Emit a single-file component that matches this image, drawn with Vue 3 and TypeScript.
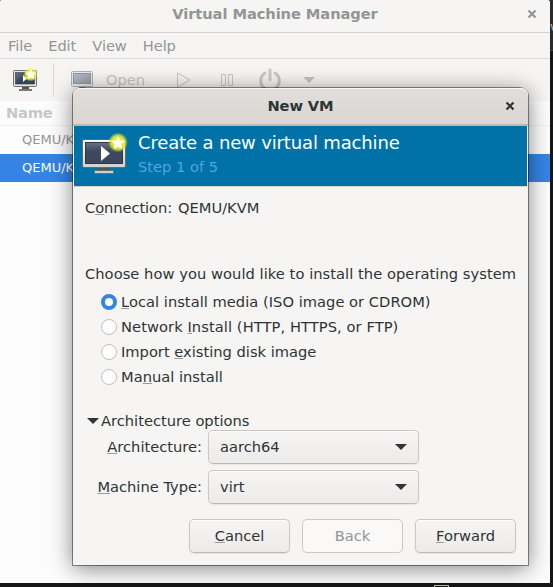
<script setup lang="ts">
import { ref } from 'vue'

interface InstallMethod {
  id: string
  before: string
  key: string
  after: string
}

const menus: string[] = ['File', 'Edit', 'View', 'Help']
const connections: string[] = ['QEMU/KVM', 'QEMU/KVM']
const methods: InstallMethod[] = [
  { id: 'local', before: '', key: 'L', after: 'ocal install media (ISO image or CDROM)' },
  { id: 'network', before: 'Network ', key: 'I', after: 'nstall (HTTP, HTTPS, or FTP)' },
  { id: 'import', before: 'Import ', key: 'e', after: 'xisting disk image' },
  { id: 'manual', before: 'Ma', key: 'n', after: 'ual install' },
]
const fields = [
  { key: 'A', label: 'rchitecture:', value: 'aarch64' },
  { key: 'M', label: 'achine Type:', value: 'virt' },
]
const selectedMethod = ref('local')
const selectedRow = ref(1)
</script>

<template>
  <div class="desktop">
    <span class="stray">v</span>
    <span class="taskicon"></span>
    <main class="window">
      <header class="titlebar">
        <span>Virtual Machine Manager</span>
        <svg class="close" width="10" height="10" viewBox="0 0 10 10"><path d="M1.5 1.5 8.5 8.5M8.5 1.5 1.5 8.5" /></svg>
      </header>
      <nav class="menubar">
        <span v-for="m in menus" :key="m">{{ m }}</span>
      </nav>
      <div class="toolbar">
        <svg class="new-icon" width="26" height="26" viewBox="0 0 26 26">
          <defs>
            <radialGradient id="glowS"><stop offset="0.4" stop-color="#f2f020" /><stop offset="0.7" stop-color="#f2f020" stop-opacity=".85" /><stop offset="1" stop-color="#f2f020" stop-opacity="0" /></radialGradient>
            <linearGradient id="scrS" x1="0" y1="0" x2="1" y2="1"><stop offset="0" stop-color="#66758c" /><stop offset=".5" stop-color="#35445a" /><stop offset="1" stop-color="#35445a" /></linearGradient>
          </defs>
          <path d="M10 20h7v2h-7z" fill="#555" />
          <path d="M7 22h13v2H7z" fill="#777974" />
          <rect x="1.5" y="3.5" width="23" height="16" rx="1" fill="#e4e4e0" stroke="#74756f" />
          <rect x="3.500" y="5.500" width="19" height="11.500" fill="url(#scrS)" stroke="#333b45" stroke-width=".6" />
          <path d="M11 8v7l4-3.500z" fill="#fff" />
          <circle cx="18.500" cy="7.500" r="7" fill="url(#glowS)" />
          <path d="m18.800 1.800 1.700 3.500 3.800.5-2.800 2.700.7 3.900-3.400-1.900-3.400 1.900.7-3.900-2.800-2.700 3.800-.5z" fill="#fff" />
        </svg>
        <i class="divider"></i>
        <svg class="open-icon" width="24" height="24" viewBox="0 0 24 24">
          <defs><linearGradient id="scrD" x1="0" y1="0" x2="1" y2="1"><stop offset="0" stop-color="#b5bbc2" /><stop offset="1" stop-color="#959da7" /></linearGradient></defs>
          <rect x="1.500" y="3.500" width="21" height="15" rx="1" fill="#e8e8e6" stroke="#b0b0ad" />
          <rect x="3.500" y="5.500" width="17" height="10" fill="url(#scrD)" stroke="#8f969e" />
          <path d="M9 19h6v2H9z" fill="#aaa" />
        </svg>
        <span class="open-label">Open</span>
        <svg class="play" width="16" height="16" viewBox="0 0 16 16"><path d="M1.500 1 14 8 1.500 15z" /></svg>
        <svg class="pause" width="14" height="14" viewBox="0 0 14 14"><path d="M1.500 1.500h4v11h-4zM8.500 1.500h4v11h-4z" /></svg>
        <svg class="power" width="24" height="24" viewBox="0 0 24 24"><path d="M7 5a9.300 9.300 0 1 0 10 0M12 1.800v10" /></svg>
        <svg class="caret" width="12" height="6" viewBox="0 0 12 6"><path d="M0 0h12L6 6z" /></svg>
      </div>
      <div class="column-head">Name</div>
      <div v-for="(c, i) in connections" :key="i" class="row" :class="{ active: i === selectedRow }">{{ c }}</div>
    </main>

    <section class="dialog">
      <header class="dialog-title">
        <span>New VM</span>
        <svg class="close" width="10" height="10" viewBox="0 0 10 10"><path d="M1.500 1.500 8.500 8.500M8.500 1.500 1.500 8.500" /></svg>
      </header>
      <div class="banner">
        <svg class="vm-icon" width="48" height="44" viewBox="0 0 48 44">
          <defs>
            <radialGradient id="glow"><stop offset="0.400" stop-color="#f5f31a" /><stop offset=".7" stop-color="#dce629" stop-opacity=".9" /><stop offset="1" stop-color="#b8d83c" stop-opacity="0" /></radialGradient>
            <linearGradient id="frame" x1="0" y1="0" x2="0" y2="1"><stop offset="0" stop-color="#fff" /><stop offset="1" stop-color="#d0d1cc" /></linearGradient>
            <linearGradient id="screen" x1="0" y1="0" x2="0" y2="1"><stop offset="0" stop-color="#65748a" /><stop offset=".4" stop-color="#3d4a60" /><stop offset="1" stop-color="#3b485c" /></linearGradient>
          </defs>
          <path d="M18 34h11v5H18z" fill="#50524f" />
          <rect x="14.500" y="37.500" width="19" height="3" rx="1" fill="#cfd0cc" stroke="#6c6e69" />
          <rect x="2.500" y="6.500" width="43" height="28" rx="1.500" fill="url(#frame)" stroke="#696b67" />
          <rect x="5.500" y="9.500" width="37" height="21" fill="url(#screen)" stroke="#2c3544" />
          <path d="M21 13v15l9-7.500z" fill="#fff" />
          <circle cx="38" cy="9.500" r="10" fill="url(#glow)" />
          <path d="m38 3 2.100 4.200 4.700.7-3.400 3.300.8 4.700-4.200-2.200-4.200 2.200.8-4.700-3.400-3.300 4.700-.7z" fill="#fff" />
        </svg>
        <div class="banner-text">
          <h1>Create a new virtual machine</h1>
          <p>Step 1 of 5</p>
        </div>
      </div>
      <div class="content">
        <div class="connection"><span>C<u>o</u>nnection:</span><span>QEMU/KVM</span></div>
        <div class="question">Choose how you would like to install the operating system</div>
        <div class="methods">
          <label v-for="m in methods" :key="m.id" @click="selectedMethod = m.id">
            <i class="radio" :class="{ checked: selectedMethod === m.id }"></i>
            <span>{{ m.before }}<u>{{ m.key }}</u>{{ m.after }}</span>
          </label>
        </div>
        <div class="expander">
          <svg width="12" height="6" viewBox="0 0 12 6"><path d="M0 0h12L6 6z" /></svg>
          <span>Architecture options</span>
        </div>
        <div class="fields">
          <template v-for="f in fields" :key="f.key">
            <span class="field-label"><u>{{ f.key }}</u>{{ f.label }}</span>
            <button class="combo">
              <span>{{ f.value }}</span>
              <svg width="12" height="6" viewBox="0 0 12 6"><path d="M0 0h12L6 6z" /></svg>
            </button>
          </template>
        </div>
        <footer class="actions">
          <button><span><u>C</u>ancel</span></button>
          <button disabled>Back</button>
          <button><span><u>F</u>orward</span></button>
        </footer>
      </div>
    </section>
  </div>
</template>

<style>
body {
  overflow: hidden;
}
</style>

<style scoped>
.desktop {
  position: relative;
  width: 553px;
  height: 587px;
  overflow: hidden;
  background: linear-gradient(#282a2b 0 50px, #3a3b3c 50px 51px, #141715 51px);
  font: 14.67px/18px "DejaVu Sans", sans-serif;
  color: #2e3436;
}
.desktop * {
  box-sizing: border-box;
}
.stray {
  position: absolute;
  left: 550px;
  top: 18px;
  font-size: 12px;
  color: #b8b8b8;
}
.taskicon {
  position: absolute;
  left: 434px;
  top: 585px;
  width: 15px;
  height: 4px;
  border: 1px solid #b9b8a0;
}
.window {
  width: 550px;
  height: 583px;
  background: #fcfcfc;
  border-radius: 2px 3px 0 0;
  overflow: hidden;
}
.titlebar {
  position: relative;
  height: 33px;
  border-bottom: 1px solid #d5d0cc;
  background: #f6f5f4;
  display: flex;
  justify-content: center;
  padding-top: 5px;
  font-weight: bold;
  letter-spacing: -0.08px;
  color: #929595;
}
.close {
  position: absolute;
  fill: none;
  stroke: currentColor;
  stroke-width: 2.2;
}
.titlebar .close {
  right: 13px;
  top: 9px;
}
.menubar {
  height: 26px;
  border-bottom: 1px solid #dcdad8;
  background: #f6f5f4;
  display: flex;
  gap: 16px;
  padding: 4px 8px;
  letter-spacing: -0.08px;
  color: #929595;
}
.toolbar {
  height: 42px;
  background: #f6f5f4;
  display: flex;
  align-items: center;
  padding-left: 12px;
  color: #c8c5c1;
}
.divider {
  width: 1px;
  height: 34px;
  background: #dad7d4;
  margin: 0 16px 0 15px;
}
.open-label {
  margin-left: 12px;
}
.play,
.pause {
  fill: none;
  stroke: #c8c5c1;
}
.play {
  margin-left: 31px;
}
.pause {
  margin-left: 28px;
}
.power {
  margin-left: 24px;
  fill: none;
  stroke: #cbc7c3;
  stroke-width: 3;
  stroke-linecap: round;
}
.caret {
  margin-left: 21px;
  fill: #c5c1bd;
}
.column-head {
  height: 25px;
  border-bottom: 1px solid #f0f0f0;
  padding: 3px 6px;
  font-weight: bold;
  letter-spacing: -0.2px;
  color: #c6c8c8;
}
.row {
  height: 28px;
  padding: 5px 22px;
  font-size: 13px;
  color: #929595;
}
.row.active {
  background: #3584e4;
  color: #fff;
}
.dialog {
  position: absolute;
  left: 73px;
  top: 88px;
  width: 455px;
  height: 477px;
  border-radius: 8px 8px 0 0;
  background: #f6f5f4;
  box-shadow: 0 0 0 1px rgba(0, 0, 0, 0.42), 0 3px 22px rgba(0, 0, 0, 0.5);
}
.dialog-title {
  position: relative;
  height: 38px;
  border-radius: 7px 7px 0 0;
  border-bottom: 2px solid #c0b9b3;
  background: linear-gradient(#e1dedb, #dad6d2);
  box-shadow: inset 0 1px #f7f6f5;
  display: flex;
  justify-content: center;
  padding-top: 9px;
  font-weight: bold;
  letter-spacing: -0.1px;
}
.dialog-title .close {
  right: 13px;
  top: 13px;
}
.banner {
  height: 61px;
  margin: 0 1px;
  border-bottom: 1px solid #d2d2d0;
  background: #0072a8;
  display: flex;
}
.vm-icon {
  flex: none;
  margin: 7px 0 0 6px;
}
.banner-text {
  padding: 5px 0 0 10px;
}
h1 {
  margin: 0;
  font-size: 18px;
  line-height: 24px;
  letter-spacing: -0.15px;
  font-weight: normal;
  color: #fff;
}
p {
  margin: 3px 0 0;
  color: #4fa6dd;
}
.content {
  padding: 12px 12px 12px;
}
.connection {
  display: flex;
  gap: 6px;
}
.connection span:first-child {
  letter-spacing: -0.08px;
}
.question {
  margin-top: 48px;
  white-space: nowrap;
  letter-spacing: 0.05px;
}
u {
  text-decoration-color: #9a9c9c;
  text-decoration-thickness: 1px;
  text-underline-offset: 1px;
  text-decoration-skip-ink: none;
}
.methods {
  padding: 6px 0 0 16px;
}
.methods label {
  height: 25px;
  display: flex;
  align-items: center;
  gap: 4px;
}
.methods label:nth-child(1) {
  letter-spacing: 0.025px;
}
.methods label:nth-child(2) {
  letter-spacing: 0.075px;
}
.radio {
  width: 16px;
  height: 16px;
  border: 1px solid #c5beb8;
  border-radius: 50%;
  background: #fff;
}
.radio.checked {
  border: 4px solid #3584e4;
}
.expander {
  margin-top: 23px;
  display: flex;
  align-items: center;
  gap: 2px;
  padding-left: 2px;
}
.expander svg,
.combo svg {
  fill: #2e3436;
}
.fields {
  display: grid;
  grid-template-columns: 117px 211px;
  column-gap: 6px;
  row-gap: 6px;
  align-items: center;
}
.field-label {
  text-align: right;
}
button {
  height: 34px;
  border: 1px solid #cdc7c2;
  border-bottom-color: #bfb8b1;
  border-radius: 5px;
  background: linear-gradient(#f6f5f4, #edebe9);
  box-shadow: inset 0 1px #fff, 0 1px 2px rgba(0, 0, 0, 0.07);
  font: inherit;
  color: inherit;
  padding: 0 12px;
}
.combo {
  display: flex;
  align-items: center;
  justify-content: space-between;
  padding: 0 11px;
}
.actions {
  display: flex;
  justify-content: flex-end;
  gap: 12px;
  margin-top: 15px;
}
.actions button {
  width: 101px;
}
.actions button:disabled {
  background: #faf9f8;
  color: #929595;
  border-color: #cdc7c2;
  box-shadow: none;
}
</style>
